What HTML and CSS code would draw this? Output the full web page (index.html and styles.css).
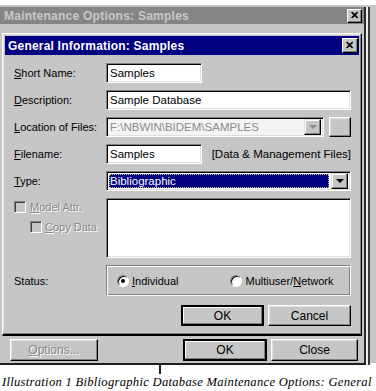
FILE: index.html
```html
<!DOCTYPE html>
<html lang="en">
<head>
    <meta charset="UTF-8">
    <title>Maintenance Options: Samples</title>
    <link rel="stylesheet" href="styles.css">
</head>
<body>
    <div class="desktop">
        <div class="window">
            <div class="titlebar outer-title">
                <span>Maintenance Options: Samples</span>
                <span class="close-btn small">&#x2715;</span>
            </div>

            <div class="window-body">
                <div class="dialog">
                    <div class="titlebar inner-title">
                        <span>General Information: Samples</span>
                        <span class="close-btn">&#x2715;</span>
                    </div>

                    <div class="form">
                        <div class="row">
                            <label class="label"><u>S</u>hort Name:</label>
                            <div class="field short">Samples</div>
                        </div>
                        <div class="row">
                            <label class="label"><u>D</u>escription:</label>
                            <div class="field wide">Sample Database</div>
                        </div>
                        <div class="row">
                            <label class="label"><u>L</u>ocation of Files:</label>
                            <div class="field combo disabled">
                                <span class="combo-text">F:\NBWIN\BIDEM\SAMPLES</span>
                                <span class="arrow-btn"><span class="arrow grey"></span></span>
                            </div>
                            <span class="btn browse"></span>
                        </div>
                        <div class="row">
                            <label class="label"><u>F</u>ilename:</label>
                            <div class="field short">Samples</div>
                            <span class="note">[Data &amp; Management Files]</span>
                        </div>
                        <div class="row">
                            <label class="label"><u>T</u>ype:</label>
                            <div class="field combo wide">
                                <span class="combo-text selected">Bibliographic</span>
                                <span class="arrow-btn"><span class="arrow"></span></span>
                            </div>
                        </div>
                        <div class="row tall">
                            <div class="checks">
                                <div class="check">
                                    <span class="box"></span>
                                    <span class="dim"><u>M</u>odel Attr.</span>
                                </div>
                                <div class="check nested">
                                    <span class="box"></span>
                                    <span class="dim"><u>C</u>opy Data</span>
                                </div>
                            </div>
                            <div class="field wide memo"></div>
                        </div>
                        <div class="row status">
                            <label class="label">Status:</label>
                            <div class="group">
                                <div class="radio">
                                    <span class="dot on"></span>
                                    <span><u>I</u>ndividual</span>
                                </div>
                                <div class="radio">
                                    <span class="dot"></span>
                                    <span>Multiuser/<u>N</u>etwork</span>
                                </div>
                            </div>
                        </div>
                        <div class="actions">
                            <span class="btn default inner-ok">OK</span>
                            <span class="btn inner-cancel">Cancel</span>
                        </div>
                    </div>
                </div>

                <div class="outer-actions">
                    <span class="btn options"><span class="dim"><u>O</u>ptions...</span></span>
                    <span class="btn default outer-ok">OK</span>
                    <span class="btn outer-close">Close</span>
                </div>
            </div>
        </div>
    </div>

    <div class="below">
        <span class="tick"></span>
        <p class="caption">Illustration 1 Bibliographic Database Maintenance Options: General</p>
    </div>
</body>
</html>
```

FILE: styles.css
```css
* {
    margin: 0;
    padding: 0;
    box-sizing: border-box;
}

body {
    width: 376px;
    height: 391px;
    overflow: hidden;
    background: #fff;
    font-family: 'Liberation Sans', Arial, sans-serif;
    font-size: 11px;
    color: #000;
}

u {
    text-decoration: underline;
    text-underline-offset: 1px;
}

/* desktop + outer window */
.desktop {
    height: 363px;
    border-top: 5px solid #fff;
    background: #c6c6c6;
}

.window {
    width: 366px;
    height: 358px;
    background: #c6c6c6;
    border-right: 2px solid #2a2a2a;
    border-bottom: 2px solid #1e1e1e;
    box-shadow: 2px 0 0 #ececec, 4px 0 0 #3a3a3a;
}

.titlebar {
    display: flex;
    align-items: center;
    justify-content: space-between;
    font-weight: bold;
    font-size: 12px;
}

.outer-title {
    height: 17px;
    margin-top: 2px;
    padding: 0 2px 0 4px;
    background: #858585;
    color: #c9c9c9;
    letter-spacing: 0.25px;
}

.close-btn {
    width: 16px;
    height: 15px;
    display: flex;
    align-items: center;
    justify-content: center;
    background: #c6c6c6;
    color: #000;
    font-size: 11px;
    font-weight: bold;
    border: 1px solid;
    border-color: #fff #000 #000 #fff;
    box-shadow: inset -1px -1px #808080;
}

.close-btn.small {
    width: 15px;
    height: 14px;
}

.window-body {
    padding: 9px 0 0 2px;
}

/* inner dialog */
.dialog {
    width: 360px;
    padding: 2px;
    border: 1px solid;
    border-color: #fff #000 #000 #fff;
    border-bottom-width: 2px;
    box-shadow: inset -1px -1px #808080, inset 1px 1px #dfdfdf;
}

.inner-title {
    height: 19px;
    padding: 0 1px 0 3px;
    background: #000080;
    color: #fff;
    letter-spacing: 0.2px;
}

.form {
    padding: 8px 8px 6px 9px;
}

.row {
    display: flex;
    align-items: center;
    height: 20px;
    margin-bottom: 7px;
}

.label {
    width: 92px;
    flex: none;
}

.field {
    height: 20px;
    display: flex;
    align-items: center;
    padding: 0 3px;
    background: #fff;
    font-size: 11.5px;
    border: 1px solid;
    border-color: #808080 #fff #fff #808080;
    box-shadow: inset 1px 1px #000, inset -1px -1px #dfdfdf;
}

.short {
    width: 96px;
}

.wide {
    width: 245px;
}

.combo {
    padding: 2px;
    justify-content: space-between;
}

.combo.disabled {
    width: 218px;
    background: #f4f4f4;
    color: #8a8a8a;
}

.combo-text {
    padding-left: 1px;
}

.combo-text.selected {
    flex: 1;
    height: 100%;
    display: flex;
    align-items: center;
    margin-right: 2px;
    background: #000080;
    color: #fff;
    outline: 1px dotted #c8c870;
    outline-offset: -1px;
}

.arrow-btn {
    width: 17px;
    height: 16px;
    flex: none;
    display: flex;
    align-items: center;
    justify-content: center;
    background: #c6c6c6;
    border: 1px solid;
    border-color: #dfdfdf #000 #000 #dfdfdf;
    box-shadow: inset -1px -1px #808080, inset 1px 1px #fff;
}

.arrow {
    width: 0;
    height: 0;
    border-left: 4px solid transparent;
    border-right: 4px solid transparent;
    border-top: 4px solid #000;
}

.arrow.grey {
    border-top-color: #8a8a8a;
}

.note {
    margin-left: auto;
    font-size: 11.5px;
}

/* buttons */
.btn {
    display: flex;
    align-items: center;
    justify-content: center;
    height: 21px;
    background: #c6c6c6;
    font-size: 12px;
    border: 1px solid;
    border-color: #fff #000 #000 #fff;
    box-shadow: inset -1px -1px #808080, inset 1px 1px #dfdfdf;
}

.btn.default {
    border: 2px solid #000;
    box-shadow: inset -1px -1px #808080, inset 1px 1px #fff;
}

.browse {
    width: 22px;
    height: 20px;
    margin-left: auto;
}

/* checkboxes + memo */
.row.tall {
    height: 60px;
    align-items: flex-start;
}

.checks {
    width: 92px;
    flex: none;
    padding-top: 2px;
}

.check {
    display: flex;
    align-items: center;
    gap: 4px;
    height: 14px;
}

.check.nested {
    margin: 6px 0 0 16px;
    gap: 3px;
}

.box {
    width: 12px;
    height: 12px;
    border: 1px solid;
    border-color: #808080 #fff #fff #808080;
    box-shadow: inset 1px 1px #404040;
}

.dim {
    color: #868686;
    text-shadow: 1px 1px 0 #fff;
}

.memo {
    height: 60px;
}

/* status group */
.row.status {
    height: 31px;
    margin-bottom: 9px;
}

.group {
    width: 245px;
    height: 31px;
    display: flex;
    align-items: center;
    padding-left: 10px;
    gap: 52px;
    border: 1px solid;
    border-color: #808080 #fff #fff #808080;
    box-shadow: inset 1px 1px #fff, inset -1px -1px #808080;
}

.radio {
    display: flex;
    align-items: center;
    gap: 3px;
}

.dot {
    width: 12px;
    height: 12px;
    border-radius: 50%;
    background: #fff;
    border: 1px solid;
    border-color: #808080 #fff #fff #808080;
    box-shadow: inset 1px 1px #000;
    display: flex;
    align-items: center;
    justify-content: center;
}

.dot.on::after {
    content: "";
    width: 4px;
    height: 4px;
    border-radius: 50%;
    background: #000;
}

.actions {
    display: flex;
    justify-content: flex-end;
    gap: 4px;
}

.inner-ok,
.inner-cancel {
    width: 83px;
}

/* outer buttons */
.outer-actions {
    display: flex;
    align-items: center;
    padding: 3px 0 0 8px;
}

.outer-actions .btn {
    height: 22px;
}

.options {
    width: 88px;
}

.outer-ok {
    width: 84px;
    margin-left: 85px;
}

.outer-close {
    width: 87px;
    margin-left: 4px;
}

/* caption */
.below {
    display: flex;
    flex-direction: column;
}

.tick {
    width: 2px;
    height: 11px;
    margin-left: 159px;
    background: #222;
}

.caption {
    margin: 1px 0 0 2px;
    font-family: 'Liberation Serif', 'Times New Roman', serif;
    font-style: italic;
    font-size: 12.6px;
    line-height: 15px;
    letter-spacing: 0.28px;
    white-space: nowrap;
}
```
